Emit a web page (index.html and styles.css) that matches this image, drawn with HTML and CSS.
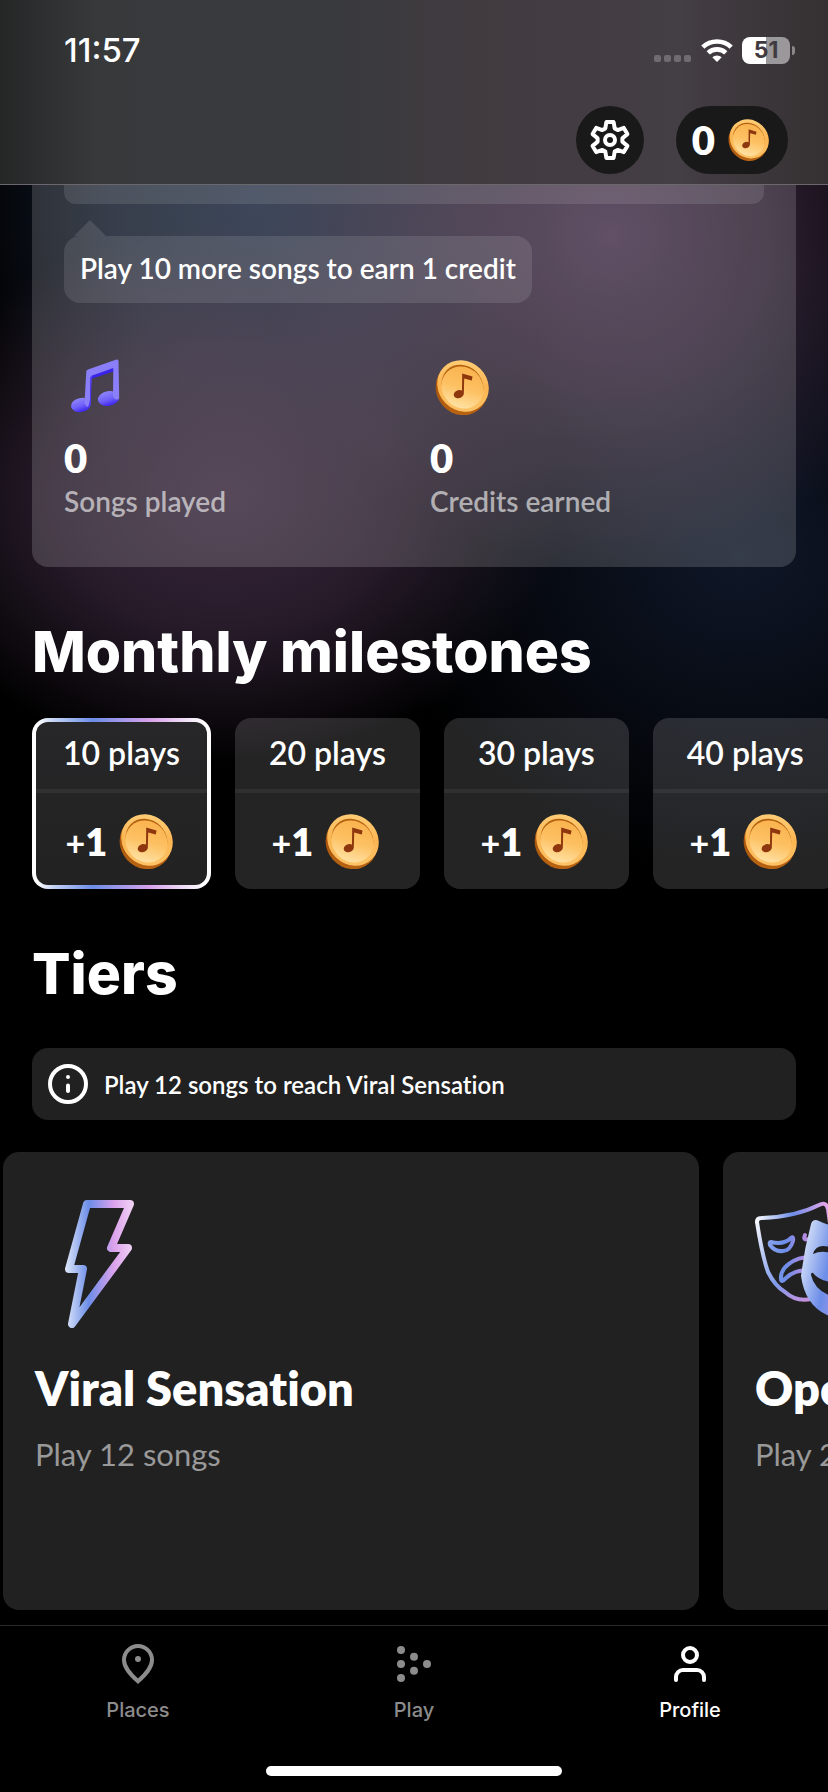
FILE: index.html
```html
<!DOCTYPE html>
<html lang="en">
<head>
<meta charset="utf-8">
<meta name="viewport" content="width=device-width, initial-scale=1">
<title>Profile</title>
<link rel="stylesheet" href="styles.css">
</head>
<body>
<svg class="defs" aria-hidden="true">
  <defs>
    <linearGradient id="rim" x1="0" y1="0" x2="1" y2="1">
      <stop offset="0" stop-color="#ffd684"/><stop offset="0.5" stop-color="#fbb552"/><stop offset="1" stop-color="#ffc970"/>
    </linearGradient>
    <linearGradient id="edge" x1="0" y1="0" x2="1" y2="1">
      <stop offset="0" stop-color="#d98220"/><stop offset="0.5" stop-color="#a8550c"/><stop offset="1" stop-color="#c06a14"/>
    </linearGradient>
    <linearGradient id="face" x1="0" y1="0" x2="0.6" y2="1">
      <stop offset="0" stop-color="#f9ae48"/><stop offset="0.6" stop-color="#fdc163"/><stop offset="1" stop-color="#ffe0a0"/>
    </linearGradient>
    <linearGradient id="noteHead" x1="0.4" y1="0" x2="0.6" y2="1">
      <stop offset="0" stop-color="#8f86fa"/><stop offset="0.55" stop-color="#6f60f8"/><stop offset="1" stop-color="#3b22f0"/>
    </linearGradient>
    <linearGradient id="holo" gradientUnits="userSpaceOnUse" x1="0" y1="0" x2="70" y2="0">
      <stop offset="0" stop-color="#dfe8fa"/><stop offset="0.34" stop-color="#6c8de8"/><stop offset="0.7" stop-color="#dca2ec"/><stop offset="1" stop-color="#f2d8f6"/>
    </linearGradient>
    <linearGradient id="maskLine" gradientUnits="userSpaceOnUse" x1="0" y1="20" x2="74" y2="0">
      <stop offset="0" stop-color="#ffffff"/><stop offset="0.5" stop-color="#6c8de8"/><stop offset="1" stop-color="#f0a8ea"/>
    </linearGradient>
    <linearGradient id="maskSide" gradientUnits="userSpaceOnUse" x1="0" y1="16" x2="56" y2="106">
      <stop offset="0" stop-color="#ffffff"/><stop offset="0.65" stop-color="#7f9aea"/><stop offset="1" stop-color="#d48fdc"/>
    </linearGradient>
    <linearGradient id="maskDetail" gradientUnits="userSpaceOnUse" x1="14" y1="0" x2="56" y2="0">
      <stop offset="0" stop-color="#86a2ec"/><stop offset="0.4" stop-color="#6c8de8"/><stop offset="1" stop-color="#c98ae0"/>
    </linearGradient>
    <linearGradient id="maskFill" gradientUnits="userSpaceOnUse" x1="44" y1="60" x2="116" y2="76">
      <stop offset="0" stop-color="#d5e0f8"/><stop offset="0.4" stop-color="#6c8de8"/><stop offset="1" stop-color="#dca2ec"/>
    </linearGradient>
    <symbol id="coin" viewBox="0 0 54 55">
      <ellipse cx="26.500" cy="29" rx="27" ry="25" transform="rotate(48 26.500 29)" fill="url(#edge)"/>
      <ellipse cx="28" cy="26" rx="27" ry="24.500" transform="rotate(45 28 26)" fill="url(#rim)"/>
      <ellipse cx="27.500" cy="25.500" rx="22" ry="19.500" transform="rotate(45 27.500 25.500)" fill="#b4610f"/>
      <ellipse cx="27.500" cy="27.500" rx="22" ry="20" transform="rotate(45 27.500 27.500)" fill="url(#face)"/>
      <path d="M27.200 13.500 37.500 16.500 36.800 20.500 29.200 18.500 28.800 34A5.200 4 -20 1 1 27 30.500Z" fill="#8e360d"/>
    </symbol>
  </defs>
</svg>

<div class="app">
  <header class="header">
    <div class="status">
      <span class="time">11:57</span>
      <div class="signals">
        <svg class="cell" width="38" height="24" viewBox="0 0 38 24" fill="#6f6b70" aria-hidden="true">
          <rect x="0" y="17" width="7" height="7" rx="2"/><rect x="10" y="17" width="7" height="7" rx="2"/><rect x="20" y="17" width="7" height="7" rx="2"/><rect x="30" y="17" width="7" height="7" rx="2"/>
        </svg>
        <svg class="wifi" width="32" height="24" viewBox="0 0 32 24" aria-hidden="true">
          <g fill="none" stroke="#fff" stroke-width="4.600">
            <path d="M1.800 9.200a20.500 20.500 0 0 1 28.400 0"/><path d="M7.200 14.900a12.800 12.800 0 0 1 17.600 0"/>
          </g>
          <path d="M16 24 11.300 19.300a6.800 6.800 0 0 1 9.400 0Z" fill="#fff"/>
        </svg>
        <div class="battery"><span class="battery-level">51</span></div>
      </div>
    </div>
    <div class="toolbar">
      <button class="round" type="button" aria-label="Settings">
        <svg width="40" height="40" viewBox="-20 -20 40 40" fill="none" stroke="#fff" stroke-width="4" stroke-linejoin="round" aria-hidden="true">
          <path d="M-4.700-11.600-3.600-18H3.600L4.700-11.600 7.700-9.900 13.800-12.100 17.400-5.900 12.400-1.700V1.700L17.400 5.900 13.800 12.100 7.700 9.900 4.700 11.600 3.600 18H-3.600L-4.700 11.600-7.700 9.900-13.800 12.100-17.400 5.900-12.400 1.700V-1.700L-17.400-5.900-13.800-12.100-7.700-9.900Z"/>
          <circle r="5"/>
        </svg>
      </button>
      <button class="pill" type="button" aria-label="0 credits"><span>0</span><svg class="coin-small" aria-hidden="true"><use href="#coin"/></svg></button>
    </div>
  </header>

  <main class="main">
    <section class="summary">
      <div class="progress"></div>
      <p class="bubble">Play 10 more songs to earn 1 credit</p>
      <div class="stats">
        <div class="stat">
          <svg class="stat-icon" viewBox="-7 -4 64 64" aria-hidden="true">
            <ellipse cx="9.800" cy="46" rx="9.900" ry="7" transform="rotate(-12 9.800 46)" fill="url(#noteHead)"/>
            <ellipse cx="37.500" cy="39.500" rx="10.700" ry="7.400" transform="rotate(-10 37.500 39.500)" fill="url(#noteHead)"/>
            <path d="M18 14 44 5V12L20 20Z" fill="#3a24e8"/>
            <path d="M15.300 12.500Q15.500 11 17 10.500L45.500 0.500Q47.500 0 47.500 2L48.200 39Q46 43 42 38L42.300 9 20.500 16.800 19.200 47Q16 50 13.500 44Z" fill="#8a7ff8"/>
            <path d="M19.200 18 20.700 17.500 19.800 45Q18.500 50 15 51 18.500 47 19 40Z" fill="#4a34f2"/>
          </svg>
          <strong class="stat-value">0</strong>
          <span class="stat-label">Songs played</span>
        </div>
        <div class="stat">
          <span class="stat-icon coin-box"><svg class="coin" aria-hidden="true"><use href="#coin"/></svg></span>
          <strong class="stat-value">0</strong>
          <span class="stat-label">Credits earned</span>
        </div>
      </div>
    </section>

    <h2 class="heading">Monthly milestones</h2>
    <ul class="milestones">
      <li class="milestone current"><div class="plays">10 plays</div><div class="reward"><span><span class="plus">+</span>1</span><svg class="coin" aria-hidden="true"><use href="#coin"/></svg></div></li>
      <li class="milestone"><div class="plays">20 plays</div><div class="reward"><span><span class="plus">+</span>1</span><svg class="coin" aria-hidden="true"><use href="#coin"/></svg></div></li>
      <li class="milestone"><div class="plays">30 plays</div><div class="reward"><span><span class="plus">+</span>1</span><svg class="coin" aria-hidden="true"><use href="#coin"/></svg></div></li>
      <li class="milestone"><div class="plays">40 plays</div><div class="reward"><span><span class="plus">+</span>1</span><svg class="coin" aria-hidden="true"><use href="#coin"/></svg></div></li>
    </ul>

    <h2 class="heading">Tiers</h2>
    <p class="notice">
      <svg width="40" height="40" viewBox="0 0 40 40" fill="none" stroke="#fff" stroke-width="4" stroke-linecap="round" aria-hidden="true">
        <circle cx="20" cy="20" r="18"/><path d="M20 21.500V27M20 13h0"/>
      </svg>
      Play 12 songs to reach Viral Sensation
    </p>
    <div class="tiers">
      <article class="tier">
        <svg class="tier-icon" viewBox="-30 0 128 128" fill="none" stroke="url(#holo)" stroke-width="8" stroke-linejoin="round" aria-hidden="true">
          <path d="M22 4H65L46 48H63L7 124 18 69H4Z"/>
        </svg>
        <h3 class="tier-name">Viral Sensation</h3>
        <p class="tier-text">Play 12 songs</p>
      </article>
      <article class="tier">
        <svg class="tier-icon" viewBox="0 0 128 128" aria-hidden="true">
          <g fill="none" stroke-width="4" stroke-linecap="round" stroke-linejoin="round">
            <path stroke="url(#maskLine)" d="M2 22Q2 18 6 18 40 17 64 5 71 1 73 9L76 30"/>
            <path stroke="url(#maskSide)" d="M2 22Q7 55 13 72 20 86 30 92 41 102 56 99"/>
            <g stroke="url(#maskDetail)">
              <path d="M16 42Q29 45 36 38 39 36 38 41 35 51 28 51 20 52 15 45 14 42 16 42Z"/>
              <path d="M50 35Q47 42 56 38"/>
              <path d="M56 57C38 57 25 68 26 79 26 83 29 80 31 78 38 71 46 70 54 70"/>
            </g>
          </g>
          <path fill="url(#maskFill)" d="M56 24Q58 18 64 21 88 32 112 28 118 27 118 35 121 82 100 105 86 119 72 115 50 105 46 76 49 50 56 24Z"/>
          <path fill="#212121" d="M58 54Q61 43 75 47 82 50 82 55 68 49 58 54ZM58 73Q66 83 84 82 98 80 106 74 98 100 80 97 60 92 56 75 56 72 58 73ZM92 56Q100 48 108 55 106 46 99 47 92 49 92 56Z"/>
        </svg>
        <h3 class="tier-name">Opening Act</h3>
        <p class="tier-text">Play 24 songs</p>
      </article>
    </div>
  </main>

  <nav class="tabs">
    <div class="tab-row">
      <a class="tab" href="#places">
        <svg width="40" height="40" viewBox="0 0 40 40" aria-hidden="true"><path d="M20 37.300C12 30 6 23.500 6 16a14 14 0 0 1 28 0C34 23.500 28 30 20 37.300Z" fill="none" stroke="currentColor" stroke-width="4"/><circle cx="20" cy="15" r="3" fill="currentColor"/></svg>
        Places
      </a>
      <a class="tab" href="#play">
        <svg width="40" height="40" viewBox="0 0 40 40" fill="currentColor" aria-hidden="true"><circle cx="7" cy="6" r="4"/><circle cx="7" cy="20" r="4"/><circle cx="7" cy="34" r="4"/><circle cx="20" cy="12.700" r="4"/><circle cx="20" cy="26.700" r="4"/><circle cx="33" cy="20" r="4"/></svg>
        Play
      </a>
      <a class="tab active" href="#profile" aria-current="page">
        <svg width="40" height="40" viewBox="0 0 40 40" fill="none" stroke="currentColor" stroke-width="4" stroke-linecap="round" aria-hidden="true"><circle cx="20" cy="11" r="7"/><path d="M6 36V33a7 7 0 0 1 7-7H27a7 7 0 0 1 7 7V36"/></svg>
        Profile
      </a>
    </div>
    <div class="home"></div>
  </nav>
</div>
</body>
</html>
```
FILE: styles.css
```css
* { box-sizing: border-box; }

body {
  margin: 0;
  background: #000;
  color: #fff;
  font-family: Lato, "Open Sans", sans-serif;
  font-variant-ligatures: none;
}

h2, h3, p, ul { margin: 0; padding: 0; }
button { border: 0; color: inherit; font: inherit; }
.defs { position: absolute; width: 0; height: 0; }

.app {
  display: flex;
  flex-direction: column;
  min-height: 100vh;
  overflow: hidden;
}

.header {
  height: 185px;
  border-bottom: 1px solid #6a686d;
  background: linear-gradient(90deg, #252727 0, #37393b 12%, #393a3d 40%, #423b40 60%, #443e45 82%, #353031 100%);
}

.status {
  display: flex;
  justify-content: space-between;
  align-items: center;
  height: 100px;
  padding: 0 33px 0 64px;
}

.time { font: 500 33px/40px Inter, sans-serif; }
.signals { display: flex; align-items: center; }
.cell { margin-right: 9px; }
.wifi { margin-right: 9px; }

.battery {
  position: relative;
  width: 48px;
  height: 27px;
  margin-right: 5px;
  border-radius: 8px;
  background: linear-gradient(90deg, #fff 50%, #9a989a 50%);
  color: #3f3b40;
  font: 700 23px/27px Inter, sans-serif;
  text-align: center;
}

.battery::after {
  content: "";
  position: absolute;
  top: 9px;
  left: 50px;
  width: 3px;
  height: 9px;
  border-radius: 0 4px 4px 0;
  background: #8a878a;
}

.toolbar {
  display: flex;
  justify-content: flex-end;
  gap: 32px;
  padding: 6px 40px 0;
}

.round, .pill {
  display: flex;
  align-items: center;
  justify-content: center;
  height: 68px;
  padding: 0;
  border-radius: 34px;
  background: #1a1919;
}

.round { width: 68px; }
.pill { gap: 13px; padding: 0 19px 0 16px; font-size: 40px; font-weight: 800; }
.coin { display: block; width: 54px; height: 55px; }
.coin-small { display: block; width: 41px; height: 42px; }

.main {
  flex: 1;
  padding: 0 32px 15px;
  background:
    radial-gradient(ellipse 350px 330px at 610px 50px, #432f49 0, rgba(67, 47, 73, 0.65) 45%, transparent 100%),
    radial-gradient(ellipse 340px 270px at 225px 310px, #37263b 0, rgba(55, 38, 59, 0.7) 50%, transparent 100%),
    radial-gradient(ellipse 300px 330px at 260px 20px, #18243a 0, rgba(24, 36, 58, 0.7) 50%, transparent 100%),
    radial-gradient(ellipse 360px 320px at 740px 370px, #0f1728 0, transparent 100%),
    #000;
}

.summary {
  padding: 0 32px 48px;
  border-radius: 0 0 16px 16px;
  background: rgba(255, 255, 255, 0.16);
}

.progress {
  height: 19px;
  margin-bottom: 32px;
  border-radius: 0 0 12px 12px;
  background: rgba(255, 255, 255, 0.11);
}

.bubble {
  position: relative;
  width: fit-content;
  padding: 15px 16px 17px;
  border-radius: 16px;
  background: rgba(255, 255, 255, 0.11);
  font-size: 28px;
  font-weight: 600;
  line-height: 35px;
}

.bubble::before {
  content: "";
  position: absolute;
  top: -16px;
  left: 10px;
  width: 32px;
  height: 16px;
  background: rgba(255, 255, 255, 0.11);
  clip-path: polygon(50% 0, 100% 100%, 0 100%);
}

.stats {
  display: grid;
  grid-template-columns: 1fr 1fr;
  gap: 32px;
  margin-top: 52px;
}

.stat { display: flex; flex-direction: column; }
.stat-icon { width: 64px; height: 64px; }
.coin-box { display: grid; place-items: center; }
.stat-value { margin-top: 17px; font-size: 40px; font-weight: 800; line-height: 44px; }
.stat-label { margin-top: 3px; color: rgba(255, 255, 255, 0.6); font-size: 28px; font-weight: 600; line-height: 36px; }

.heading {
  margin-top: 49px;
  font-family: Inter, sans-serif;
  font-size: 57px;
  font-weight: 800;
  line-height: 72px;
}

.milestones {
  display: flex;
  gap: 24px;
  margin: 30px -32px 0 0;
  overflow: hidden;
  list-style: none;
}

.milestone {
  flex: none;
  border-radius: 16px;
  background: rgba(255, 255, 255, 0.14);
}

.plays {
  padding: 0 34px 2px;
  border-bottom: 4px solid rgba(255, 255, 255, 0.06);
  font-size: 32px;
  font-weight: 600;
  line-height: 69px;
}

.reward {
  display: flex;
  align-items: center;
  justify-content: center;
  gap: 12px;
  height: 96px;
  padding-right: 4px;
  font-size: 38px;
  font-weight: 800;
}

.plus { font-size: 34px; font-weight: 700; }

.current {
  border: 4px solid transparent;
  background:
    linear-gradient(#272628, #222) padding-box,
    linear-gradient(90deg, #fff 3%, #c4d3f4 12%, #6c8de8 34%, #d8a2ea 66%, #f3e6f8 88%, #fff 97%) border-box;
}

.current .plays { padding: 0 27px 6px; line-height: 61px; }
.current .reward { height: 92px; padding-top: 4px; }

.notice {
  display: flex;
  align-items: center;
  gap: 16px;
  min-height: 72px;
  margin-top: 38px;
  padding: 0 16px;
  border-radius: 16px;
  background: #212121;
  font-size: 24px;
  font-weight: 600;
}

.tiers {
  display: grid;
  grid-auto-flow: column;
  grid-auto-columns: calc(100vw - 132px);
  gap: 24px;
  margin: 32px -32px 0 -29px;
  overflow: hidden;
}

.tier {
  min-height: 458px;
  padding: 48px 32px;
  border-radius: 16px;
  background: #212121;
}

.tier-icon { display: block; width: 128px; height: 128px; }
.tier-name { margin-top: 34px; font-size: 47px; font-weight: 800; line-height: 52px; }
.tier-text { margin-top: 22px; color: #999; font-size: 31px; line-height: 36px; }

.tabs {
  padding-bottom: 16px;
  border-top: 1px solid #2a2a2a;
  background: #000;
}

.tab-row { display: grid; grid-template-columns: repeat(3, 1fr); }

.tab {
  display: flex;
  flex-direction: column;
  align-items: center;
  gap: 14px;
  padding-top: 18px;
  color: #8c8c8c;
  font: 500 20px/24px Inter, sans-serif;
  text-decoration: none;
}

.active { color: #fff; }

.home {
  width: 296px;
  height: 10px;
  margin: 44px auto 0;
  border-radius: 5px;
  background: #fff;
}
```
